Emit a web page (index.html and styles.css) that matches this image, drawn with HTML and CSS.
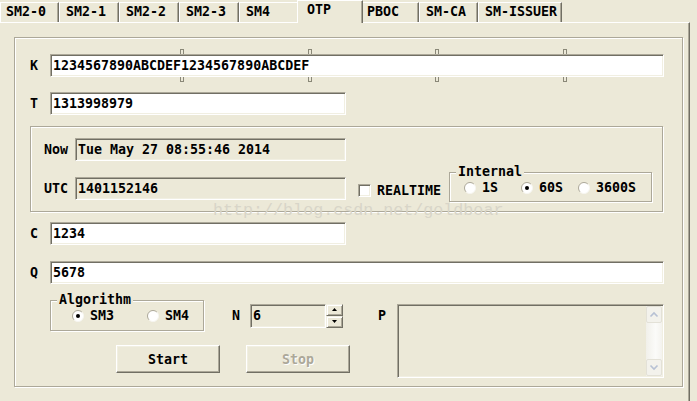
FILE: index.html
```html
<!DOCTYPE html>
<html>
<head>
    <title>OTP</title>
    <link rel="stylesheet" href="styles.css">
</head>
<body>
    <div class="tabs">
        <div class="tab first">SM2-0</div>
        <div class="tab">SM2-1</div>
        <div class="tab">SM2-2</div>
        <div class="tab">SM2-3</div>
        <div class="tab">SM4</div>
        <div class="tab active">OTP</div>
        <div class="tab pboc">PBOC</div>
        <div class="tab smca">SM-CA</div>
        <div class="tab issuer">SM-ISSUER</div>
    </div>
    <div class="page">
        <div class="frame">
            <div class="row">
                <label class="label">K</label>
                <div class="field long">1234567890ABCDEF1234567890ABCDEF
                    <span class="handle up h1"></span>
                    <span class="handle up h2"></span>
                    <span class="handle up h3"></span>
                    <span class="handle up h4"></span>
                    <span class="handle down h1"></span>
                    <span class="handle down h2"></span>
                    <span class="handle down h3"></span>
                    <span class="handle down h4"></span>
                </div>
            </div>
            <div class="row row-t">
                <label class="label">T</label>
                <div class="field short">1313998979</div>
            </div>

            <div class="inner">
                <div class="row">
                    <label class="label label-wide">Now</label>
                    <div class="field time readonly">Tue May 27 08:55:46 2014</div>
                </div>
                <div class="utc-row">
                    <label class="label label-wide utc-label">UTC</label>
                    <div class="field time readonly utc-field">1401152146</div>
                    <div class="check">
                        <span class="check-box"></span>
                        <span class="check-label">REALTIME</span>
                    </div>
                    <div class="group internal">
                        <span class="group-title">Internal</span>
                        <div class="radios">
                            <div class="radio r-int">
                                <svg width="12" height="12" viewBox="0 0 12 12"><circle cx="6" cy="6" r="5.5" fill="#fff"/><path d="M2.1 9.9A5.5 5.5 0 0 1 9.9 2.1" fill="none" stroke="#aca899"/><path d="M9.9 2.1A5.5 5.5 0 0 1 2.1 9.9" fill="none" stroke="#f7f6f1"/></svg>
                                <span>1S</span>
                            </div>
                            <div class="radio r-int">
                                <svg width="12" height="12" viewBox="0 0 12 12"><circle cx="6" cy="6" r="5.5" fill="#fff"/><path d="M2.1 9.9A5.5 5.5 0 0 1 9.9 2.1" fill="none" stroke="#aca899"/><path d="M9.9 2.1A5.5 5.5 0 0 1 2.1 9.9" fill="none" stroke="#f7f6f1"/><circle cx="6" cy="6" r="2" fill="#000"/></svg>
                                <span>60S</span>
                            </div>
                            <div class="radio">
                                <svg width="12" height="12" viewBox="0 0 12 12"><circle cx="6" cy="6" r="5.5" fill="#fff"/><path d="M2.1 9.9A5.5 5.5 0 0 1 9.9 2.1" fill="none" stroke="#aca899"/><path d="M9.9 2.1A5.5 5.5 0 0 1 2.1 9.9" fill="none" stroke="#f7f6f1"/></svg>
                                <span>3600S</span>
                            </div>
                        </div>
                    </div>
                </div>
            </div>

            <div class="row row-c">
                <label class="label">C</label>
                <div class="field short">1234</div>
            </div>
            <div class="row row-q">
                <label class="label">Q</label>
                <div class="field long">5678</div>
            </div>

            <div class="bottom">
                <div class="left">
                    <div class="algo-row">
                        <div class="group algorithm">
                            <span class="group-title">Algorithm</span>
                            <div class="radios algo-radios">
                                <div class="radio r-algo">
                                    <svg width="12" height="12" viewBox="0 0 12 12"><circle cx="6" cy="6" r="5.5" fill="#fff"/><path d="M2.1 9.9A5.5 5.5 0 0 1 9.9 2.1" fill="none" stroke="#aca899"/><path d="M9.9 2.1A5.5 5.5 0 0 1 2.1 9.9" fill="none" stroke="#f7f6f1"/><circle cx="6" cy="6" r="2" fill="#000"/></svg>
                                    <span>SM3</span>
                                </div>
                                <div class="radio">
                                    <svg width="12" height="12" viewBox="0 0 12 12"><circle cx="6" cy="6" r="5.5" fill="#fff"/><path d="M2.1 9.9A5.5 5.5 0 0 1 9.9 2.1" fill="none" stroke="#aca899"/><path d="M9.9 2.1A5.5 5.5 0 0 1 2.1 9.9" fill="none" stroke="#f7f6f1"/></svg>
                                    <span>SM4</span>
                                </div>
                            </div>
                        </div>
                        <label class="label n-label">N</label>
                        <div class="field readonly n-field">6</div>
                        <div class="spin">
                            <div class="spin-btn"><svg width="5" height="3" viewBox="0 0 5 3"><polygon points="0,3 2.5,0 5,3" fill="#000"/></svg></div>
                            <div class="spin-btn"><svg width="5" height="3" viewBox="0 0 5 3"><polygon points="0,0 5,0 2.5,3" fill="#000"/></svg></div>
                        </div>
                    </div>
                    <div class="buttons">
                        <div class="button">Start</div>
                        <div class="button disabled">Stop</div>
                    </div>
                </div>
                <label class="label p-label">P</label>
                <div class="field readonly memo">
                    <div class="scrollbar">
                        <div class="scroll-btn"><svg width="10" height="7" viewBox="0 0 10 7"><polyline points="1.5,5.5 5,2 8.5,5.5" fill="none" stroke="#b7c1d4" stroke-width="1.6"/></svg></div>
                        <div class="scroll-track"></div>
                        <div class="scroll-btn"><svg width="10" height="7" viewBox="0 0 10 7"><polyline points="1.5,1.5 5,5 8.5,1.5" fill="none" stroke="#b7c1d4" stroke-width="1.6"/></svg></div>
                    </div>
                </div>
            </div>
        </div>
    </div>
    <div class="watermark">http://blog.csdn.net/goldboar</div>
</body>
</html>
```

FILE: styles.css
```css
* {
    box-sizing: border-box;
}
body {
    margin: 0;
    width: 697px;
    height: 401px;
    overflow: hidden;
    position: relative;
    background-color: #ece9d8;
    font-family: "DejaVu Sans Mono", "Liberation Mono", monospace;
    font-size: 13.3px;
    font-weight: bold;
    color: #000;
}

/* tab strip */
.tabs {
    display: flex;
    align-items: flex-end;
    height: 22px;
}
.tab {
    width: 60px;
    height: 20px;
    padding-left: 6px;
    line-height: 18px;
    white-space: nowrap;
    border-top: 1px solid #fff;
    border-left: 1px solid #fff;
    border-right: 1px solid #716f64;
    box-shadow: inset -1px 0 0 #aca899;
}
.tab.first {
    width: 59px;
    padding-left: 5px;
}
.tab.active {
    width: 66px;
    height: 23px;
    margin: 0 -2px -1px;
    padding-left: 9px;
    position: relative;
    z-index: 1;
    background-color: #ece9d8;
}
.tab.pboc {
    width: 58px;
    padding-left: 5px;
}
.tab.smca {
    width: 59px;
}
.tab.issuer {
    width: 84px;
}

/* tab page */
.page {
    width: 690px;
    height: 379px;
    border-top: 1px solid #fff;
    border-right: 1px solid #716f64;
    box-shadow: inset -1px 0 0 #aca899;
    padding: 14px 0 0 14px;
}
.frame {
    width: 669px;
    height: 350px;
    border: 1px solid #aca899;
    box-shadow: inset 1px 1px 0 #fff, 1px 1px 0 #fff;
    padding: 16px 0 0 15px;
}

.row {
    display: flex;
    align-items: center;
    height: 23px;
}
.row-t {
    margin-top: 15px;
}
.row-c {
    margin-top: 10px;
}
.row-q {
    margin-top: 16px;
}
.label {
    width: 20px;
    white-space: nowrap;
}
.label-wide {
    width: 31px;
}

/* sunken edit box */
.field {
    position: relative;
    flex-shrink: 0;
    height: 23px;
    padding: 0 2px;
    line-height: 21px;
    white-space: nowrap;
    background-color: #fff;
    border: 1px solid;
    border-color: #aca899 #fff #fff #aca899;
    box-shadow: inset 1px 1px 0 #716f64, inset -1px -1px 0 #f1efe2;
}
.field.readonly {
    background-color: #ece9d8;
}
.long {
    width: 614px;
}
.short {
    width: 296px;
}
.time {
    width: 271px;
}

.handle {
    position: absolute;
    width: 4px;
    height: 5px;
    border: 1px solid #8a8878;
    background-color: #ece9d8;
}
.handle.up {
    top: -6px;
    border-bottom: none;
}
.handle.down {
    top: 22px;
    border-top: none;
}
.h1 { left: 129px; }
.h2 { left: 257px; }
.h3 { left: 384px; }
.h4 { left: 512px; }

/* inner group */
.inner {
    margin-top: 11px;
    width: 633px;
    height: 86px;
    border: 1px solid #aca899;
    box-shadow: inset 1px 1px 0 #fff, 1px 1px 0 #fff;
    padding: 11px 0 0 13px;
}
.utc-row {
    display: flex;
    align-items: flex-start;
    height: 31px;
    margin-top: 11px;
}
.utc-label {
    margin-top: 5px;
    line-height: 23px;
}
.utc-field {
    margin-top: 5px;
}
.check {
    display: flex;
    align-items: center;
    gap: 6px;
    height: 13px;
    margin: 12px 0 0 12px;
}
.check-box {
    width: 13px;
    height: 13px;
    background-color: #fff;
    border: 1px solid;
    border-color: #aca899 #fff #fff #aca899;
    box-shadow: inset 1px 1px 0 #716f64, inset -1px -1px 0 #f1efe2;
}
.check-label {
    width: 62px;
    line-height: 13px;
    white-space: nowrap;
}

/* group boxes */
.group {
    display: flex;
    flex-direction: column;
    align-items: flex-start;
    border: 1px solid #aca899;
    box-shadow: inset 1px 1px 0 #fff, 1px 1px 0 #fff;
}
.group-title {
    margin: -8px 0 0 6px;
    padding: 0 2px;
    line-height: 14px;
    background-color: #ece9d8;
}
.internal {
    width: 203px;
    height: 30px;
    margin-left: 10px;
}
.radios {
    display: flex;
    margin-top: 2px;
    padding-left: 14px;
}
.radio {
    display: flex;
    align-items: center;
    gap: 6px;
    line-height: 14px;
}
.r-int {
    width: 57px;
}
.algorithm {
    width: 154px;
    height: 31px;
}
.algo-radios {
    padding-left: 21px;
}
.r-algo {
    width: 75px;
}

/* bottom area */
.bottom {
    display: flex;
    align-items: flex-start;
    margin-top: 16px;
    padding-left: 20px;
}
.left {
    display: flex;
    flex-direction: column;
    width: 300px;
}
.algo-row {
    display: flex;
    align-items: center;
}
.n-label {
    width: 18px;
    margin-left: 28px;
}
.n-field {
    width: 76px;
    height: 24px;
}
.spin {
    display: flex;
    flex-direction: column;
    width: 17px;
    height: 24px;
}
.spin-btn {
    display: flex;
    align-items: center;
    justify-content: center;
    height: 12px;
    border: 1px solid;
    border-color: #f1efe2 #716f64 #716f64 #f1efe2;
    box-shadow: inset 1px 1px 0 #fff, inset -1px -1px 0 #aca899;
}
.buttons {
    display: flex;
    gap: 26px;
    margin-top: 14px;
    padding-left: 66px;
}
.button {
    display: flex;
    align-items: center;
    justify-content: center;
    width: 104px;
    height: 28px;
    border: 1px solid;
    border-color: #fff #716f64 #716f64 #fff;
    box-shadow: inset -1px -1px 0 #aca899, inset 1px 1px 0 #f1efe2;
}
.button.disabled {
    color: #aca899;
    text-shadow: 1px 1px 0 #fff;
}
.p-label {
    width: 19px;
    margin: 4px 0 0 28px;
    line-height: 23px;
}
.memo {
    display: flex;
    justify-content: flex-end;
    width: 267px;
    height: 74px;
    margin-top: 4px;
    padding: 1px 1px 1px 0;
}
.scrollbar {
    display: flex;
    flex-direction: column;
    width: 16px;
    background: linear-gradient(to right, #f1f0ea, #fbfbf9 60%, #f4f3ee);
}
.scroll-btn {
    display: flex;
    align-items: center;
    justify-content: center;
    height: 17px;
    border: 1px solid #e3e1d7;
    border-radius: 2px;
    background-color: #f3f2ec;
}
.scroll-track {
    flex: 1;
}

.watermark {
    position: absolute;
    left: 213px;
    top: 202px;
    font-family: "Liberation Mono", monospace;
    font-weight: normal;
    font-size: 16.7px;
    line-height: 17px;
    color: #d8d5c8;
}
```
